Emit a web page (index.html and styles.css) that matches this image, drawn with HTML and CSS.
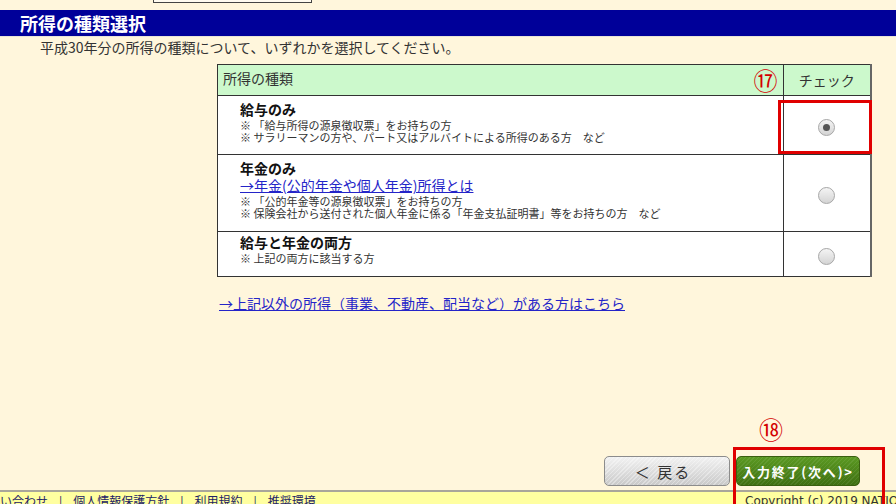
FILE: index.html
```html
<!DOCTYPE html>
<html lang="ja">
<head>
<meta charset="utf-8">
<title>所得の種類選択</title>
<link rel="stylesheet" href="styles.css">
</head>
<body>
<div class="page">
  <div class="topbox"></div>
  <h1 class="title">所得の種類選択</h1>
  <p class="intro">平成30年分の所得の種類について、いずれかを選択してください。</p>

  <table class="kinds">
    <thead>
      <tr class="head">
        <th class="c-kind">所得の種類<span class="mark mark17">⑰</span></th>
        <th class="c-check">チェック</th>
      </tr>
    </thead>
    <tbody>
      <tr class="r1">
        <td class="c-kind">
          <div class="kname">給与のみ</div>
          <div class="note">※ 「給与所得の源泉徴収票」をお持ちの方</div>
          <div class="note">※ サラリーマンの方や、パート又はアルバイトによる所得のある方　など</div>
        </td>
        <td class="c-check"><span class="radio checked"></span></td>
      </tr>
      <tr class="r2">
        <td class="c-kind">
          <div class="kname">年金のみ</div>
          <a class="klink" href="#">→年金(公的年金や個人年金)所得とは</a>
          <div class="note">※ 「公的年金等の源泉徴収票」をお持ちの方</div>
          <div class="note">※ 保険会社から送付された個人年金に係る「年金支払証明書」等をお持ちの方　など</div>
        </td>
        <td class="c-check"><span class="radio"></span></td>
      </tr>
      <tr class="r3">
        <td class="c-kind">
          <div class="kname">給与と年金の両方</div>
          <div class="note">※ 上記の両方に該当する方</div>
        </td>
        <td class="c-check"><span class="radio"></span></td>
      </tr>
    </tbody>
  </table>

  <a class="other" href="#">→上記以外の所得（事業、不動産、配当など）がある方はこちら</a>

  <div class="actions">
    <div class="mark-row"><span class="mark mark18">⑱</span></div>
    <div class="buttons">
      <button class="btn back">＜&nbsp;戻る</button>
      <button class="btn next">入力終了(次へ)&gt;</button>
    </div>
  </div>

  <footer class="footer">
    <div class="links">
      <a href="#">い合わせ</a><span class="sep">|</span><a href="#">個人情報保護方針</a><span class="sep">|</span><a href="#">利用規約</a><span class="sep">|</span><a href="#">推奨環境</a>
    </div>
    <div class="copy">Copyright (c) 2019 NATIONAL TAX AGENCY</div>
  </footer>

  <div class="hl hl17"></div>
  <div class="hl hl18"></div>
</div>
</body>
</html>
```

FILE: styles.css
```css
html, body {
  margin: 0;
  padding: 0;
}
body {
  width: 896px;
  height: 504px;
  overflow: hidden;
  background: #fff6dc;
  font-family: "Noto Sans CJK JP", "Noto Sans", sans-serif;
  color: #333;
}
.page {
  position: relative;
  height: 518px;
  display: flex;
  flex-direction: column;
}
.topbox {
  margin-left: 153px;
  width: 157px;
  height: 2px;
  border: 1px solid #444;
  border-top: none;
  background: #fffbf0;
}
.title {
  margin: 7px 0 0 0;
  height: 26px;
  line-height: 26px;
  padding-left: 20px;
  background: #000099;
  color: #fff;
  font-size: 18px;
  font-weight: bold;
  border-bottom: 1px solid #e8e4d8;
}
.intro {
  margin: 0;
  padding-left: 40px;
  height: 21px;
  line-height: 21px;
  font-size: 14px;
  color: #333;
}
.kinds {
  margin: 6px 0 0 217px;
  width: 655px;
  border-collapse: collapse;
  background: #fff;
  border-right: 2px solid #666;
}
.kinds th, .kinds td {
  border: 1px solid #333;
  padding: 0;
  box-sizing: border-box;
}
.kinds .c-check {
  width: 88px;
  text-align: center;
  vertical-align: middle;
}
.head th {
  height: 31px;
  background: #ccf9cc;
  font-weight: normal;
  font-size: 14px;
  color: #333;
  text-align: left;
}
.head th.c-kind {
  padding-left: 5px;
}
.head th.c-check {
  text-align: center;
}
.mark {
  color: #d40000;
  font-size: 24px;
  line-height: 1;
}
.mark17 {
  float: right;
  margin-right: 5px;
  margin-top: 0;
}
.kinds td.c-kind {
  vertical-align: top;
  padding-left: 22px;
}
.r1 td { height: 59px; }
.r1 td.c-kind { padding-top: 4px; }
.r2 td { height: 77px; }
.r2 td.c-kind { padding-top: 4px; }
.r3 td { height: 45px; }
.r3 td.c-kind { padding-top: 1px; }
.kname {
  font-size: 14px;
  font-weight: bold;
  line-height: 18px;
  color: #111;
}
.note {
  font-size: 11px;
  line-height: 12px;
  color: #333;
  margin-top: 0;
}
.kname + .note { margin-top: 1px; }
.klink {
  display: block;
  font-size: 14px;
  line-height: 17px;
  color: #2424c8;
  text-decoration: underline;
  margin-top: 0;
}
.klink + .note { margin-top: 1px; }
.radio {
  display: inline-block;
  width: 15px;
  height: 15px;
  border-radius: 50%;
  border: 1px solid #a8a8a8;
  background: linear-gradient(#f4f4f4, #d4d4d4);
  position: relative;
  vertical-align: middle;
}
.radio.checked::after {
  content: "";
  position: absolute;
  left: 4px;
  top: 4px;
  width: 7px;
  height: 7px;
  border-radius: 50%;
  background: #555;
}
.other {
  margin: 17px 0 0 219px;
  align-self: flex-start;
  font-size: 14px;
  line-height: 18px;
  color: #2424c8;
  text-decoration: underline;
}
.actions {
  margin-top: auto;
  display: flex;
  flex-direction: column;
  align-items: flex-end;
  padding-right: 36px;
}
.mark-row {
  width: 124px;
  padding-left: 23px;
  box-sizing: border-box;
  height: 26px;
}
.buttons {
  margin-top: 13px;
  display: flex;
  gap: 6px;
}
.btn {
  height: 30px;
  border-radius: 5px;
  font-family: "Noto Sans CJK JP", sans-serif;
  padding: 0;
  cursor: pointer;
}
.btn.back {
  width: 126px;
  border: 1px solid #8c8c8c;
  background:
    repeating-linear-gradient(135deg, rgba(255,255,255,0.35) 0 1px, rgba(0,0,0,0) 1px 3px),
    linear-gradient(#f2f2f2, #c9c9c9);
  color: #333;
  font-size: 15px;
  letter-spacing: 2px;
  padding-right: 8px;
}
.btn.next {
  width: 124px;
  border: 1px solid #3a5f10;
  background:
    repeating-linear-gradient(135deg, rgba(255,255,255,0.08) 0 1px, rgba(0,0,0,0) 1px 3px),
    linear-gradient(#5b9a22, #3f7012);
  color: #fff;
  font-size: 13px;
  font-weight: bold;
  letter-spacing: 1.8px;
}
.footer {
  margin-top: 4px;
  flex: none;
  height: 25px;
  border-top: 2px solid #a9a69a;
  background: #ffffa0;
  display: flex;
  font-size: 12px;
  line-height: 16px;
  padding-top: 1px;
}
.links {
  flex: 1;
  white-space: nowrap;
}
.links a {
  color: #222266;
  text-decoration: none;
}
.sep {
  margin: 0 11px;
  color: #222266;
}
.copy {
  flex: none;
  width: 151px;
  overflow: hidden;
  white-space: nowrap;
  font-family: "DejaVu Sans", sans-serif;
  font-size: 12px;
  color: #333;
}
.hl {
  position: absolute;
  border: 3px solid #e00000;
  box-sizing: border-box;
}
.hl17 {
  left: 778px;
  top: 100px;
  width: 94px;
  height: 54px;
}
.hl18 {
  left: 733px;
  top: 447px;
  width: 152px;
  height: 70px;
}
```
